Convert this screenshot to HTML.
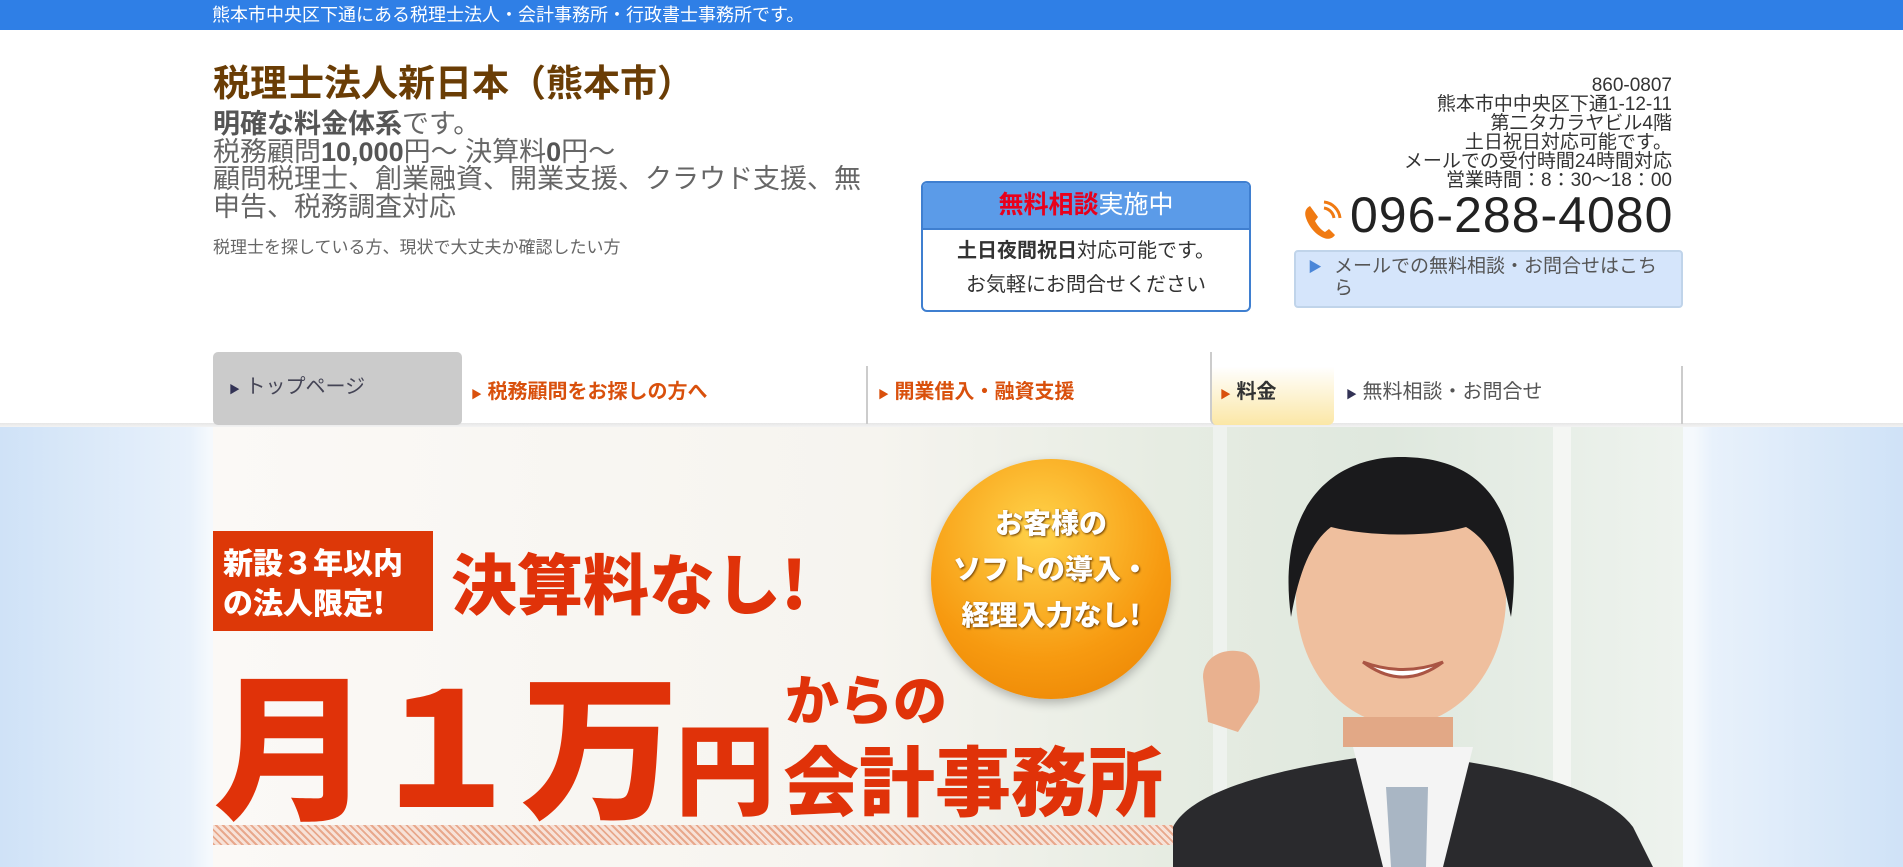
<!DOCTYPE html>
<html><head><meta charset="utf-8">
<style>
*{margin:0;padding:0;box-sizing:border-box}
body{width:1903px;height:867px;overflow:hidden;background:#fff;font-family:"Liberation Sans","Noto Sans CJK JP",sans-serif;position:relative}
.abs{position:absolute}
.top{left:0;top:0;width:1903px;height:30px;background:#2f7fe6;color:#fff;font-size:18px;line-height:30px;padding-left:212px}
.title{left:213px;top:62px;font-size:37px;font-weight:bold;color:#6a3d05;letter-spacing:0px;line-height:44px}
.desc{left:213px;top:111px;font-size:27px;line-height:27.5px;color:#666;width:680px}
.desc b{color:#555}
.sub{left:213px;top:233px;font-size:17px;color:#666}
.box{left:921px;top:181px;width:330px;height:131px;border:2px solid #3f7fd0;border-radius:6px;overflow:hidden}
.box .h{height:47px;background:#5b9be8;color:#fff;font-size:25px;text-align:center;line-height:45px;border-bottom:2px solid #3f7fd0}
.box .h b{color:#e8001c}
.box .l{font-size:20px;color:#333;text-align:center;line-height:34px;padding-top:4px}
.addr{right:231px;top:76px;text-align:right;font-size:19px;line-height:19px;color:#333}
.tel{left:1350px;top:186px;font-size:50px;color:#222;letter-spacing:1px}
.mail{left:1294px;top:250px;width:389px;height:58px;border:2px solid #c0d4ea;border-radius:4px;background:#d5e5fb;font-size:19px;color:#555;padding:4px 0 0 38px;line-height:22px}
.nav{left:213px;top:352px;height:73px;width:1470px}
.shadow{left:0;top:423px;width:1903px;height:8px;background:linear-gradient(#e6e6e6,#fff)}
.ni{position:absolute;top:14px;height:58px;font-size:20px;line-height:52px}
.banner{left:0;top:427px;width:1903px;height:440px;background:linear-gradient(90deg,#cfe2f7,#e8f1fb 10%,#f5f9fd 11%,#f5f9fd 89%,#e8f1fb 90%,#cfe2f7)}
.bimg{left:213px;top:427px;width:1470px;height:440px;background:linear-gradient(90deg,#fbf9f6 0%,#f6f4ef 45%,#e6ece2 65%,#dfe8de 80%,#eef3ee 100%);overflow:hidden}
.red{color:#e03209;font-weight:900;font-family:"Noto Sans CJK JP",sans-serif}
</style></head><body>
<div class="abs top">熊本市中央区下通にある税理士法人・会計事務所・行政書士事務所です。</div>
<div class="abs title">税理士法人新日本（熊本市）</div>
<div class="abs desc"><b>明確な料金体系</b>です。<br>税務顧問<b>10,000</b>円～ 決算料<b>0</b>円～<br>顧問税理士、創業融資、開業支援、クラウド支援、無<br>申告、税務調査対応</div>
<div class="abs sub">税理士を探している方、現状で大丈夫か確認したい方</div>
<div class="abs box"><div class="h"><b>無料相談</b>実施中</div><div class="l"><b>土日夜間祝日</b>対応可能です。<br>お気軽にお問合せください</div></div>
<div class="abs addr">860-0807<br>熊本市中中央区下通1-12-11<br>第二タカラヤビル4階<br>土日祝日対応可能です。<br>メールでの受付時間24時間対応<br>営業時間：8：30～18：00</div>
<svg class="abs" style="left:1302px;top:200px" width="42" height="42" viewBox="0 0 42 42"><path d="M8 6c-4 2-6 6-4 12 3 9 10 17 18 20 5 2 9 0 11-3l-6-6-4 3c-4-2-8-7-10-11l3-4z" fill="#f07a12"/><path d="M22 8a12 12 0 0 1 10 10M22 2a18 18 0 0 1 16 16" stroke="#f07a12" stroke-width="3" fill="none"/></svg>
<div class="abs tel">096-288-4080</div>
<div class="abs mail"><span style="position:absolute;left:12px;top:4px;color:#4a86d8;font-size:14px">▶</span>メールでの無料相談・お問合せはこち<br>ら</div>
<div class="abs shadow"></div>
<div class="abs nav">
 <div class="ni" style="left:0;top:0;width:249px;height:73px;background:#cbcbcb;border-radius:5px;color:#445;padding-left:16px;line-height:70px"><span style="font-size:11px;color:#335">▶</span> トップページ</div>
 <div class="ni" style="left:250px;width:405px;color:#d9500c;font-weight:bold;padding-left:8px;border-right:2px solid #ccc"><span style="font-size:11px">▶</span> 税務顧問をお探しの方へ</div>
 <div class="ni" style="left:657px;width:339px;color:#d9500c;font-weight:bold;padding-left:8px"><span style="font-size:11px">▶</span> 開業借入・融資支援</div>
 <div class="ni" style="left:997px;top:0;height:73px;width:124px;background:linear-gradient(#fff 20%,#fbe7a6);border-radius:0 0 6px 6px;color:#333;font-weight:bold;padding-left:8px;line-height:80px;border-left:2px solid #ccc"><span style="font-size:11px;color:#d9500c">▶</span> 料金</div>
 <div class="ni" style="left:1125px;width:345px;color:#555;padding-left:8px;border-right:2px solid #ccc"><span style="font-size:11px;color:#335">▶</span> 無料相談・お問合せ</div>
</div>
<div class="abs banner"></div>
<div class="abs bimg">
 <div class="abs" style="left:0;top:104px;width:220px;height:100px;background:#dd3808;color:#fff;font-weight:900;font-size:30px;line-height:40px;padding:10px 0 0 10px;font-family:'Noto Sans CJK JP',sans-serif">新設３年以内<br>の法人限定!</div>
 <div class="abs red" style="left:238px;top:104px;font-size:66px;line-height:100px">決算料なし!</div>
 <div class="abs red" style="left:0;top:212px;font-size:158px;line-height:200px;letter-spacing:-4px">月１万<span style="font-size:100px">円</span></div>
 <div class="abs red" style="left:572px;top:240px;font-size:54px;line-height:60px">からの</div>
 <div class="abs red" style="left:570px;top:300px;font-size:76px;line-height:100px">会計事務所</div>
 <div class="abs" style="left:0;top:398px;width:960px;height:20px;background:repeating-linear-gradient(45deg,#e8a88c 0 2px,#f7e2d8 2px 5px)"></div>
 <div class="abs" style="left:718px;top:32px;width:240px;height:240px;border-radius:50%;background:radial-gradient(circle at 45% 30%,#ffd34a,#f79a10 60%,#e87f00);box-shadow:0 4px 10px rgba(0,0,0,.25);color:#fff;text-align:center;font-weight:900;font-size:28px;line-height:46px;padding-top:40px;text-shadow:1px 1px 2px #6a3a00;font-family:'Noto Sans CJK JP',sans-serif">お客様の<br>ソフトの導入・<br>経理入力なし!</div>
 <svg class="abs" style="left:960px;top:0" width="510" height="440" viewBox="0 0 510 440">
  <rect x="40" y="0" width="14" height="440" fill="#eef2ee"/>
  <rect x="380" y="0" width="18" height="440" fill="#f4f6f3"/>
  <path d="M0 400c20-40 120-60 190-70l70 0c80 10 170 30 200 70l20 40H0z" fill="#2a2a2d"/>
  <path d="M180 320l30 120h60l30-120z" fill="#f4f4f4"/>
  <path d="M213 360l5 80h35l2-80z" fill="#a9b6c4"/>
  <path d="M30 250c0-20 20-30 40-25 15 5 20 30 15 50l-20 30-30-10z" fill="#e9b18f"/>
  <ellipse cx="228" cy="170" rx="105" ry="128" fill="#efbf9e"/>
  <path d="M118 190c-15-110 40-160 110-160 80 0 125 50 110 160-10-50-20-75-45-90-35 10-95 10-135 0-20 15-32 45-40 90z" fill="#1a1a1c"/>
  <path d="M190 235q40 30 80 0q-40 15-80 0z" fill="#fff" stroke="#a54" stroke-width="3"/>
  <rect x="170" y="290" width="110" height="30" fill="#e2a886"/>
 </svg>
</div>
</body></html>
